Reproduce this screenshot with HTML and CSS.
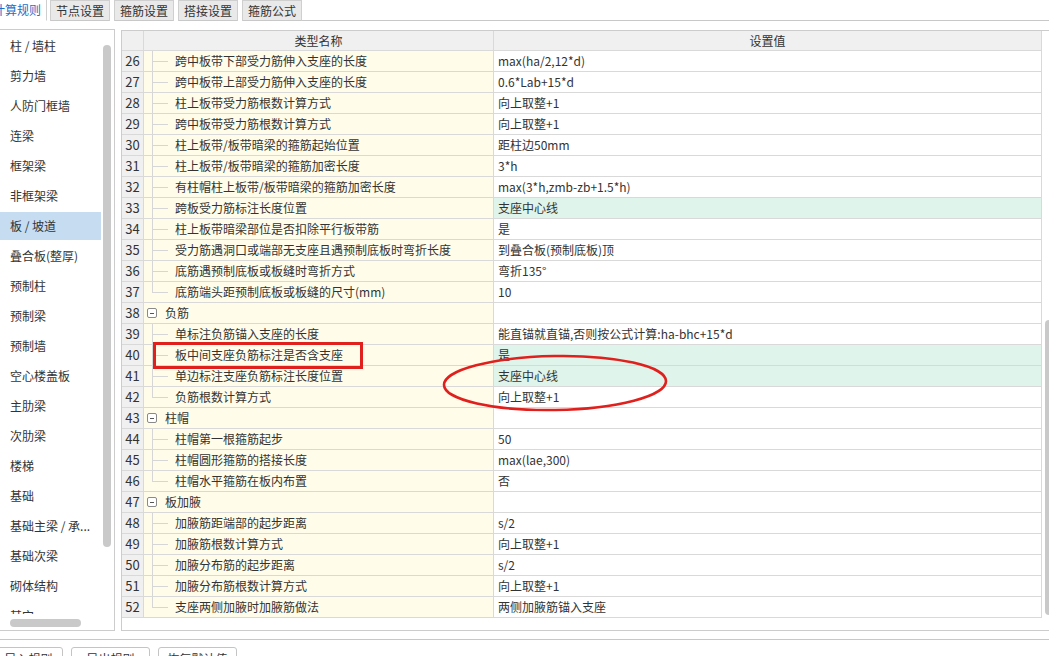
FILE: index.html
```html
<!DOCTYPE html>
<html lang="zh">
<head>
<meta charset="utf-8">
<title>计算规则</title>
<link rel="stylesheet" href="styles.css">
</head>
<body>
<div class="tabs">
  <div class="tab active">计算规则</div>
  <div class="tab">节点设置</div>
  <div class="tab">箍筋设置</div>
  <div class="tab">搭接设置</div>
  <div class="tab">箍筋公式</div>
  <div class="tab-fill"></div>
</div>

<div class="main">
  <div class="side">
    <div class="side-list">
      <div class="item">柱 / 墙柱</div>
      <div class="item">剪力墙</div>
      <div class="item">人防门框墙</div>
      <div class="item">连梁</div>
      <div class="item">框架梁</div>
      <div class="item">非框架梁</div>
      <div class="item selected">板 / 坡道</div>
      <div class="item">叠合板(整厚)</div>
      <div class="item">预制柱</div>
      <div class="item">预制梁</div>
      <div class="item">预制墙</div>
      <div class="item">空心楼盖板</div>
      <div class="item">主肋梁</div>
      <div class="item">次肋梁</div>
      <div class="item">楼梯</div>
      <div class="item">基础</div>
      <div class="item">基础主梁 / 承...</div>
      <div class="item">基础次梁</div>
      <div class="item">砌体结构</div>
      <div class="item">其它</div>
    </div>
    <div class="vscroll side-v"></div>
    <div class="hscroll"></div>
  </div>

  <div class="table-panel">
    <div class="grid">
      <div class="row head"><div class="num"></div><div class="hname">类型名称</div><div class="hval">设置值</div></div>
      <div class="row"><div class="num">26</div><div class="name child">跨中板带下部受力筋伸入支座的长度</div><div class="val">max(ha/2,12*d)</div></div>
      <div class="row"><div class="num">27</div><div class="name child">跨中板带上部受力筋伸入支座的长度</div><div class="val">0.6*Lab+15*d</div></div>
      <div class="row"><div class="num">28</div><div class="name child">柱上板带受力筋根数计算方式</div><div class="val">向上取整+1</div></div>
      <div class="row"><div class="num">29</div><div class="name child">跨中板带受力筋根数计算方式</div><div class="val">向上取整+1</div></div>
      <div class="row"><div class="num">30</div><div class="name child">柱上板带/板带暗梁的箍筋起始位置</div><div class="val">距柱边50mm</div></div>
      <div class="row"><div class="num">31</div><div class="name child">柱上板带/板带暗梁的箍筋加密长度</div><div class="val">3*h</div></div>
      <div class="row"><div class="num">32</div><div class="name child">有柱帽柱上板带/板带暗梁的箍筋加密长度</div><div class="val">max(3*h,zmb-zb+1.5*h)</div></div>
      <div class="row"><div class="num">33</div><div class="name child">跨板受力筋标注长度位置</div><div class="val changed">支座中心线</div></div>
      <div class="row"><div class="num">34</div><div class="name child">柱上板带暗梁部位是否扣除平行板带筋</div><div class="val">是</div></div>
      <div class="row"><div class="num">35</div><div class="name child">受力筋遇洞口或端部无支座且遇预制底板时弯折长度</div><div class="val">到叠合板(预制底板)顶</div></div>
      <div class="row"><div class="num">36</div><div class="name child">底筋遇预制底板或板缝时弯折方式</div><div class="val">弯折135°</div></div>
      <div class="row"><div class="num">37</div><div class="name child last">底筋端头距预制底板或板缝的尺寸(mm)</div><div class="val">10</div></div>
      <div class="row"><div class="num">38</div><div class="name group"><span class="toggle"></span>负筋</div><div class="val"></div></div>
      <div class="row"><div class="num">39</div><div class="name child">单标注负筋锚入支座的长度</div><div class="val">能直锚就直锚,否则按公式计算:ha-bhc+15*d</div></div>
      <div class="row"><div class="num">40</div><div class="name child">板中间支座负筋标注是否含支座</div><div class="val changed">是</div></div>
      <div class="row"><div class="num">41</div><div class="name child">单边标注支座负筋标注长度位置</div><div class="val changed">支座中心线</div></div>
      <div class="row"><div class="num">42</div><div class="name child last">负筋根数计算方式</div><div class="val">向上取整+1</div></div>
      <div class="row"><div class="num">43</div><div class="name group"><span class="toggle"></span>柱帽</div><div class="val"></div></div>
      <div class="row"><div class="num">44</div><div class="name child">柱帽第一根箍筋起步</div><div class="val">50</div></div>
      <div class="row"><div class="num">45</div><div class="name child">柱帽圆形箍筋的搭接长度</div><div class="val">max(lae,300)</div></div>
      <div class="row"><div class="num">46</div><div class="name child last">柱帽水平箍筋在板内布置</div><div class="val">否</div></div>
      <div class="row"><div class="num">47</div><div class="name group"><span class="toggle"></span>板加腋</div><div class="val"></div></div>
      <div class="row"><div class="num">48</div><div class="name child">加腋筋距端部的起步距离</div><div class="val">s/2</div></div>
      <div class="row"><div class="num">49</div><div class="name child">加腋筋根数计算方式</div><div class="val">向上取整+1</div></div>
      <div class="row"><div class="num">50</div><div class="name child">加腋分布筋的起步距离</div><div class="val">s/2</div></div>
      <div class="row"><div class="num">51</div><div class="name child">加腋分布筋根数计算方式</div><div class="val">向上取整+1</div></div>
      <div class="row"><div class="num">52</div><div class="name child last">支座两侧加腋时加腋筋做法</div><div class="val">两侧加腋筋锚入支座</div></div>
    </div>
    <div class="vscroll table-v"></div>
  </div>
</div>

<div class="footer">
  <div class="btn first">导入规则</div>
  <div class="btn">导出规则</div>
  <div class="btn">恢复默认值</div>
</div>

<div class="mark-rect"></div>
<svg class="mark-ellipse" width="240" height="70" viewBox="0 0 240 70">
  <ellipse cx="120" cy="35" rx="111" ry="27" fill="none" stroke="#e0201c" stroke-width="2.6" transform="rotate(-1 120 35)"/>
</svg>
</body>
</html>
```

FILE: styles.css
```css
* { box-sizing: border-box; }

html, body {
  margin: 0;
  padding: 0;
}

body {
  width: 1049px;
  height: 656px;
  overflow: hidden;
  position: relative;
  background: #ffffff;
  font-family: "Noto Sans CJK SC", "Microsoft YaHei", "Noto Sans", sans-serif;
  font-size: 12px;
  color: #333333;
}

/* ---------- tabs ---------- */
.tabs {
  display: flex;
  height: 21px;
  gap: 4px;
  margin-left: -14px;
}

.tab {
  height: 21px;
  padding: 0 5px;
  line-height: 19px;
  background: #e9e9e9;
  border: 1px solid #cfcfcf;
  border-bottom: 1px solid #c8c8c8;
  color: #333;
  white-space: nowrap;
}

.tab.active {
  background: #ffffff;
  color: #1c6fc9;
  border-color: #cfcfcf;
  border-bottom-color: #ffffff;
  border-top: none;
  padding: 0 5px 0 6px;
  margin-right: -1px;
  line-height: 20px;
}

.tab-fill {
  flex: 1;
  border-bottom: 1px solid #c8c8c8;
  margin-left: -4px;
}

/* ---------- main ---------- */
.main {
  display: flex;
  gap: 6px;
  margin-top: 8px;
  height: 602px;
}

.side {
  position: relative;
  width: 116px;
  margin-left: -1px;
  height: 602px;
  border: 1px solid #cccccc;
  background: #fff;
}

.side-list {
  height: 584px;
  overflow: hidden;
  padding-top: 2px;
}

.item {
  height: 28px;
  margin-bottom: 2px;
  line-height: 28px;
  padding-left: 10px;
  width: 101px;
  white-space: nowrap;
  color: #333;
}

.item.selected {
  background: #c6dcf1;
}

.vscroll {
  position: absolute;
  background: #c9c9c9;
  border-radius: 4px;
}

.side-v {
  left: 103px;
  top: 15px;
  width: 8px;
  height: 502px;
}

.hscroll {
  position: absolute;
  left: 10px;
  top: 589px;
  width: 71px;
  height: 8px;
  background: #c9c9c9;
  border-radius: 4px;
}

.table-panel {
  position: relative;
  flex: 1;
  margin-top: 1px;
  height: 601px;
  margin-right: -10px;
  border: 1px solid #cccccc;
  background: #fff;
}

.table-v {
  left: 923px;
  top: 289px;
  width: 8px;
  height: 295px;
}

/* ---------- grid ---------- */
.grid {
  width: 920px;
}

.row {
  display: grid;
  grid-template-columns: 22px 350px 548px;
  height: 21px;
}

.row > div {
  border-right: 1px solid #d9d9d9;
  border-bottom: 1px solid #d9d9d9;
  line-height: 20px;
  white-space: nowrap;
  overflow: hidden;
}

.row.head {
  height: 20px;
}

.row.head > div {
  background: #f0f0f0;
  line-height: 19px;
  text-align: center;
}

.num {
  background: #f0f0f0;
  text-align: center;
  font-size: 13px;
  color: #333;
}

.name {
  position: relative;
  background: #fffdea;
}

.name.child {
  padding-left: 31px;
}

.name.child::before {
  content: "";
  position: absolute;
  left: 8px;
  top: 0;
  bottom: -1px;
  border-left: 1px solid #d6d6d6;
}

.name.child.last::before {
  bottom: 10px;
}

.name.child::after {
  content: "";
  position: absolute;
  left: 8px;
  top: 10px;
  width: 16px;
  border-top: 1px solid #d6d6d6;
}

.name.group {
  padding-left: 21px;
}

.toggle {
  position: absolute;
  left: 3px;
  top: 5px;
  width: 10px;
  height: 10px;
  border: 1px solid #8a8a8a;
  border-radius: 2px;
  background: #fff;
}

.toggle::after {
  content: "";
  position: absolute;
  left: 2px;
  top: 4px;
  width: 4px;
  border-top: 1px solid #555;
}

.val {
  padding-left: 4px;
  background: #ffffff;
}

.val.changed {
  background: #dff4eb;
}

/* ---------- footer ---------- */
.footer {
  margin-top: 8px;
  border-top: 1px solid #c8c8c8;
  padding-top: 7px;
  display: flex;
  gap: 8px;
  margin-left: -16px;
}

.btn {
  width: 79px;
  height: 24px;
  border: 1px solid #c4c4c4;
  border-radius: 3px;
  background: #fff;
  text-align: center;
  line-height: 22px;
  color: #333;
}

.btn.first {
  padding-left: 10px;
}

/* ---------- annotations ---------- */
.mark-rect {
  position: absolute;
  left: 153px;
  top: 342px;
  width: 210px;
  height: 27px;
  border: 3px solid #e0201c;
}

.mark-ellipse {
  position: absolute;
  left: 435px;
  top: 348px;
}
```
